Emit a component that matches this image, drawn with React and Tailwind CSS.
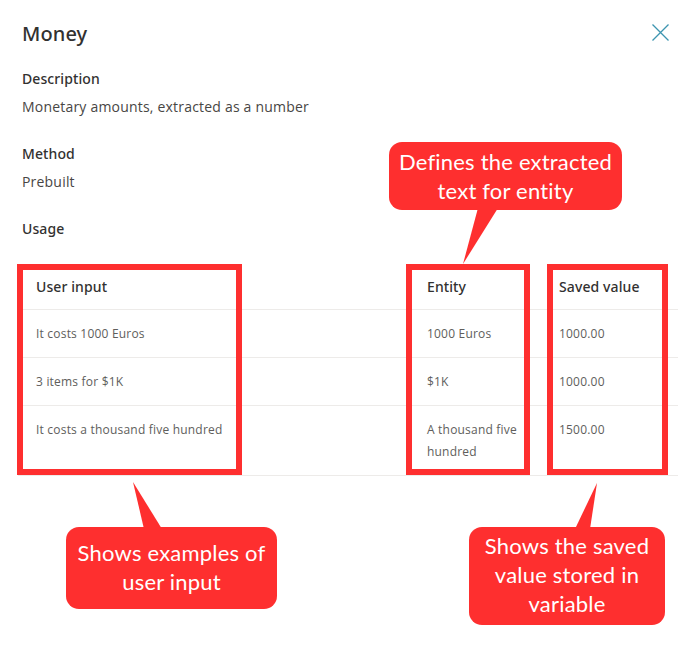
import React from "react";

const rows = [
  { input: "It costs 1000 Euros", entity: "1000 Euros", saved: "1000.00" },
  { input: "3 items for $1K", entity: "$1K", saved: "1000.00" },
  { input: "It costs a thousand five hundred", entity: "A thousand five hundred", saved: "1500.00" },
];

function Callout({ className, children }) {
  return (
    <div className={"absolute bg-[#fe2f2f] rounded-[13px] text-white text-center font-['Lato',sans-serif] text-[22px] leading-[29px] " + className}>
      {children}
    </div>
  );
}

const label = "font-['Noto_Sans',sans-serif] font-medium tracking-[0.1px]";

export default function App() {
  return (
    <div className="relative w-[700px] h-[656px] bg-white overflow-hidden font-['Open_Sans',sans-serif] tracking-[0.2px] text-[#323130]">
      <div className="flex justify-between items-start pl-[22px] pr-[31px] pt-[20px]">
        <h1 className={"text-[20px] leading-[28px] " + label}>Money</h1>
        <button className="mt-[4px]" aria-label="Close">
          <svg width="17" height="17" viewBox="0 0 17 17">
            <path d="M0.5 0.5 L16.5 16.5 M16.5 0.5 L0.5 16.5" stroke="#3d95b0" strokeWidth="1.3" fill="none" />
          </svg>
        </button>
      </div>

      <div className="px-[22px] pt-[21px] flex flex-col text-[14px] leading-[20px]">
        <div className={label}>Description</div>
        <div className="mt-[8px] text-[#484644]">Monetary amounts, extracted as a number</div>
        <div className={"mt-[27px] " + label}>Method</div>
        <div className="mt-[8px] text-[#484644]">Prebuilt</div>
        <div className={"mt-[27px] " + label}>Usage</div>
      </div>

      <div className="ml-[18px] mt-[24px] w-[660px]">
        <div className={"grid grid-cols-[397px_132px_131px] h-[47px] items-center border-b border-[#edebe9] text-[14px] " + label}>
          <div className="pl-[18px]">User input</div>
          <div className="pl-[12px]">Entity</div>
          <div className="pl-[12px]">Saved value</div>
        </div>
        {rows.map((r) => (
          <div key={r.input} className="grid grid-cols-[397px_132px_131px] py-[12.5px] border-b border-[#edebe9] text-[12px] leading-[22px] text-[#605e5c]">
            <div className="pl-[18px]">{r.input}</div>
            <div className="pl-[12px] pr-[14px]">{r.entity}</div>
            <div className="pl-[12px]">{r.saved}</div>
          </div>
        ))}
      </div>

      {/* red highlight boxes */}
      <div className="absolute left-[17px] top-[264px] w-[225px] h-[211px] border-[6px] border-[#fe2f2f]" />
      <div className="absolute left-[406px] top-[264px] w-[124px] h-[211px] border-[6px] border-[#fe2f2f]" />
      <div className="absolute left-[547px] top-[264px] w-[121px] h-[211px] border-[6px] border-[#fe2f2f]" />

      {/* tails */}
      <svg className="absolute left-0 top-0" width="700" height="656" viewBox="0 0 700 656">
        <polygon points="478,208 498,208 463,264" fill="#fe2f2f" />
        <polygon points="133,482 144,529 162,529" fill="#fe2f2f" />
        <polygon points="597,483 575,529 590,529" fill="#fe2f2f" />
      </svg>

      <Callout className="left-[389px] top-[142px] w-[233px] h-[68px] pt-[5px]">
        Defines the extracted
        <br />
        text for entity
      </Callout>
      <Callout className="left-[66px] top-[527px] w-[211px] h-[82px] pt-[11px]">
        Shows examples of
        <br />
        user input
      </Callout>
      <Callout className="left-[469px] top-[527px] w-[196px] h-[98px] pt-[4px]">
        Shows the saved
        <br />
        value stored in
        <br />
        variable
      </Callout>
    </div>
  );
}
